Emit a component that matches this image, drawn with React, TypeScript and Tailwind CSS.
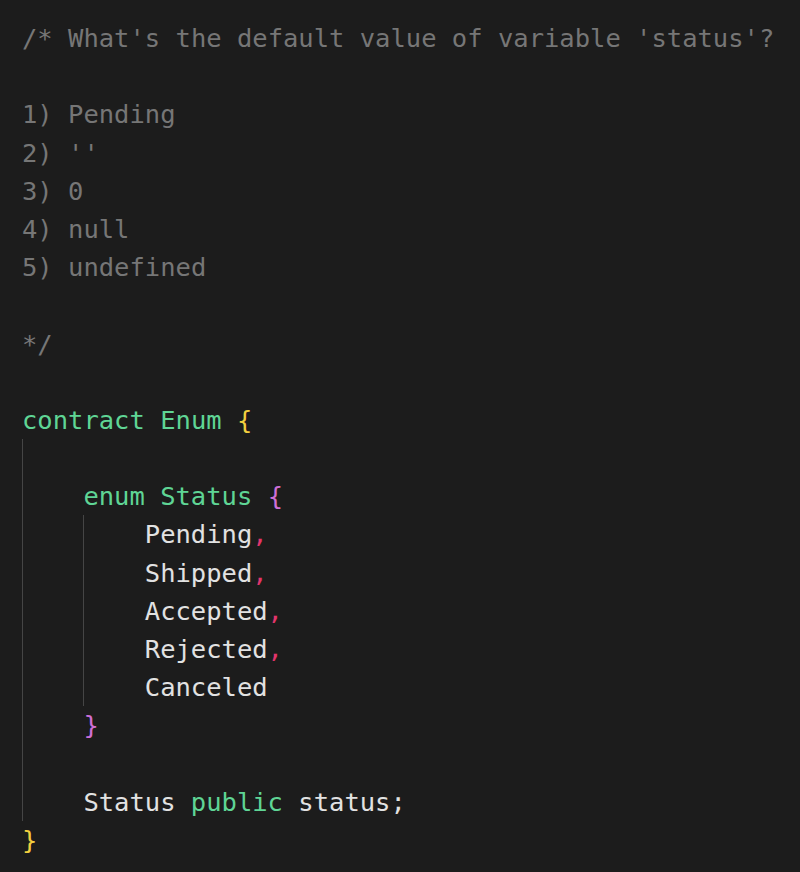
import React from "react";

type Tok = [string, string];

const C = {
  cm: "text-[#767676]",
  tx: "text-[#e2e2e2]",
  kw: "text-[#5fd595]",
  y: "text-[#f2cf3f]",
  m: "text-[#cf6fd6]",
  p: "text-[#e2356c]",
};

type Line = { guides: number; indent: number; toks: Tok[] };

const lines: Line[] = [
  { guides: 0, indent: 0, toks: [[C.cm, "/* What's the default value of variable 'status'?"]] },
  { guides: 0, indent: 0, toks: [] },
  { guides: 0, indent: 0, toks: [[C.cm, "1) Pending"]] },
  { guides: 0, indent: 0, toks: [[C.cm, "2) ''"]] },
  { guides: 0, indent: 0, toks: [[C.cm, "3) 0"]] },
  { guides: 0, indent: 0, toks: [[C.cm, "4) null"]] },
  { guides: 0, indent: 0, toks: [[C.cm, "5) undefined"]] },
  { guides: 0, indent: 0, toks: [] },
  { guides: 0, indent: 0, toks: [[C.cm, "*/"]] },
  { guides: 0, indent: 0, toks: [] },
  { guides: 0, indent: 0, toks: [[C.kw, "contract Enum "], [C.y, "{"]] },
  { guides: 1, indent: 0, toks: [] },
  { guides: 0, indent: 1, toks: [[C.kw, "enum Status "], [C.m, "{"]] },
  { guides: 2, indent: 0, toks: [[C.tx, "Pending"], [C.p, ","]] },
  { guides: 2, indent: 0, toks: [[C.tx, "Shipped"], [C.p, ","]] },
  { guides: 2, indent: 0, toks: [[C.tx, "Accepted"], [C.p, ","]] },
  { guides: 2, indent: 0, toks: [[C.tx, "Rejected"], [C.p, ","]] },
  { guides: 2, indent: 0, toks: [[C.tx, "Canceled"]] },
  { guides: 0, indent: 1, toks: [[C.m, "}"]] },
  { guides: 1, indent: 0, toks: [] },
  { guides: 0, indent: 1, toks: [[C.tx, "Status "], [C.kw, "public"], [C.tx, " status;"]] },
  { guides: 0, indent: 0, toks: [[C.y, "}"]] },
];

function Row({ line }: { line: Line }) {
  const guideCells = [];
  for (let i = 0; i < line.guides; i++) {
    guideCells.push(
      <span key={"g" + i} className="w-[61.4px] h-full shrink-0 border-l-[1.5px] border-[#454545]" />
    );
  }
  for (let i = 0; i < line.indent; i++) {
    guideCells.push(
      <span
        key={"i" + i}
        className={
          "w-[61.4px] h-full shrink-0 " +
          (i === 0 ? "border-l-[1.5px] border-[#454545]" : "")
        }
      />
    );
  }
  return (
    <div className="flex items-center h-[38.2px] whitespace-pre">
      {guideCells}
      <span>
        {line.toks.map((t, i) => (
          <span key={i} className={t[0]}>
            {t[1]}
          </span>
        ))}
      </span>
    </div>
  );
}

export default function App() {
  return (
    <div
      className="w-[800px] h-[872px] bg-[#1c1c1c] overflow-hidden pt-[19px] pl-[22px] text-[25.5px] leading-[38.2px]"
      style={{ fontFamily: "'DejaVu Sans Mono', monospace" }}
    >
      {lines.map((l, i) => (
        <Row key={i} line={l} />
      ))}
    </div>
  );
}
